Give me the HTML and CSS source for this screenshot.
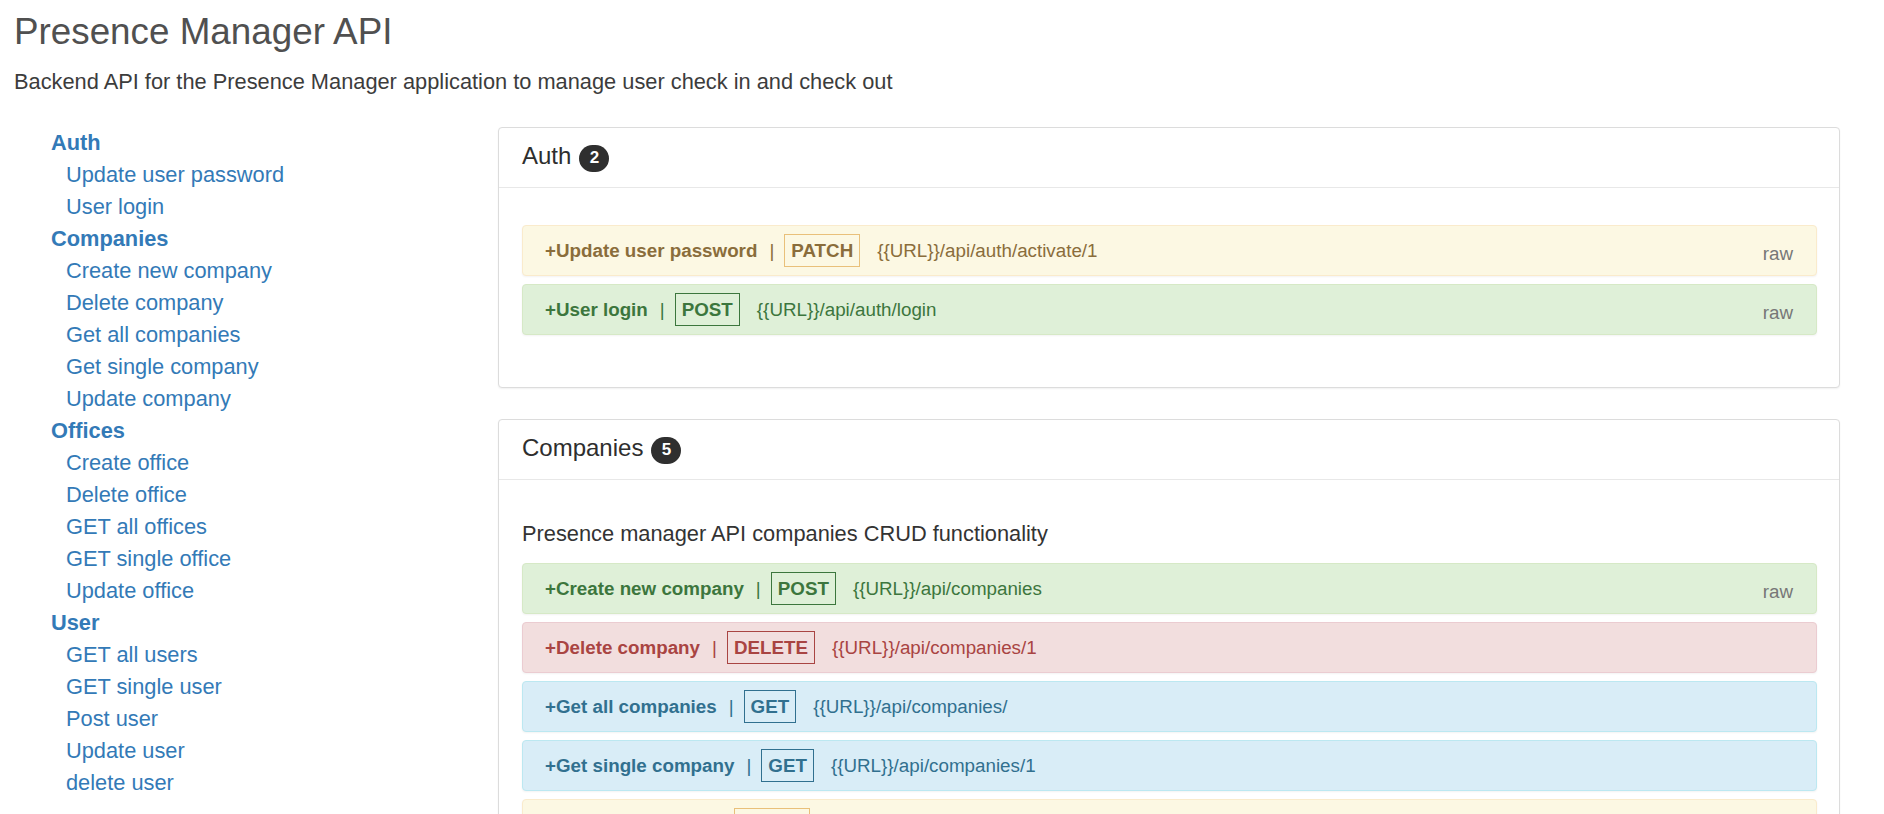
FILE: index.html
```html
<!DOCTYPE html>
<html lang="en">
<head>
<meta charset="utf-8">
<title>Presence Manager API</title>
<link rel="stylesheet" href="styles.css">
</head>
<body>
<div class="page">
  <header class="intro">
    <h1 class="title">Presence Manager API</h1>
    <p class="lead">Backend API for the Presence Manager application to manage user check in and check out</p>
  </header>
  <div class="layout">
    <nav class="toc">
      <ul class="toc-list">
        <li><a class="toc-head" href="#auth">Auth</a>
          <ul class="toc-sub">
            <li><a class="toc-link" href="#">Update user password</a></li>
            <li><a class="toc-link" href="#">User login</a></li>
          </ul>
        </li>
        <li><a class="toc-head" href="#companies">Companies</a>
          <ul class="toc-sub">
            <li><a class="toc-link" href="#">Create new company</a></li>
            <li><a class="toc-link" href="#">Delete company</a></li>
            <li><a class="toc-link" href="#">Get all companies</a></li>
            <li><a class="toc-link" href="#">Get single company</a></li>
            <li><a class="toc-link" href="#">Update company</a></li>
          </ul>
        </li>
        <li><a class="toc-head" href="#offices">Offices</a>
          <ul class="toc-sub">
            <li><a class="toc-link" href="#">Create office</a></li>
            <li><a class="toc-link" href="#">Delete office</a></li>
            <li><a class="toc-link" href="#">GET all offices</a></li>
            <li><a class="toc-link" href="#">GET single office</a></li>
            <li><a class="toc-link" href="#">Update office</a></li>
          </ul>
        </li>
        <li><a class="toc-head" href="#user">User</a>
          <ul class="toc-sub">
            <li><a class="toc-link" href="#">GET all users</a></li>
            <li><a class="toc-link" href="#">GET single user</a></li>
            <li><a class="toc-link" href="#">Post user</a></li>
            <li><a class="toc-link" href="#">Update user</a></li>
            <li><a class="toc-link" href="#">delete user</a></li>
          </ul>
        </li>
      </ul>
    </nav>
    <main class="content">
      <section class="panel" id="auth">
        <div class="panel-heading">
          <h2 class="panel-title">Auth</h2>
          <span class="count">2</span>
        </div>
        <div class="panel-body">
          <div class="endpoint endpoint--warning">
            <span class="ep-name">+Update user password</span>
            <span class="ep-sep">|</span>
            <span class="ep-method">PATCH</span>
            <span class="ep-url">{{URL}}/api/auth/activate/1</span>
            <span class="ep-raw">raw</span>
          </div>
          <div class="endpoint endpoint--success">
            <span class="ep-name">+User login</span>
            <span class="ep-sep">|</span>
            <span class="ep-method">POST</span>
            <span class="ep-url">{{URL}}/api/auth/login</span>
            <span class="ep-raw">raw</span>
          </div>
        </div>
      </section>
      <section class="panel" id="companies">
        <div class="panel-heading">
          <h2 class="panel-title">Companies</h2>
          <span class="count">5</span>
        </div>
        <div class="panel-body">
          <p class="desc">Presence manager API companies CRUD functionality</p>
          <div class="endpoint endpoint--success">
            <span class="ep-name">+Create new company</span>
            <span class="ep-sep">|</span>
            <span class="ep-method">POST</span>
            <span class="ep-url">{{URL}}/api/companies</span>
            <span class="ep-raw">raw</span>
          </div>
          <div class="endpoint endpoint--danger">
            <span class="ep-name">+Delete company</span>
            <span class="ep-sep">|</span>
            <span class="ep-method">DELETE</span>
            <span class="ep-url">{{URL}}/api/companies/1</span>
          </div>
          <div class="endpoint endpoint--info">
            <span class="ep-name">+Get all companies</span>
            <span class="ep-sep">|</span>
            <span class="ep-method">GET</span>
            <span class="ep-url">{{URL}}/api/companies/</span>
          </div>
          <div class="endpoint endpoint--info">
            <span class="ep-name">+Get single company</span>
            <span class="ep-sep">|</span>
            <span class="ep-method">GET</span>
            <span class="ep-url">{{URL}}/api/companies/1</span>
          </div>
          <div class="endpoint endpoint--warning">
            <span class="ep-name">+Update company</span>
            <span class="ep-sep">|</span>
            <span class="ep-method">PATCH</span>
            <span class="ep-url">{{URL}}/api/companies/1</span>
            <span class="ep-raw">raw</span>
          </div>
        </div>
      </section>
    </main>
  </div>
</div>
</body>
</html>
```

FILE: styles.css
```css
html, body {
  margin: 0;
  padding: 0;
  background: #fff;
}

body {
  font-family: "Liberation Sans", Arial, Helvetica, sans-serif;
  color: #333;
}

.intro {
  padding-left: 14px;
}

.title {
  margin: 12px 0 0;
  font-size: 36.8px;
  line-height: 40px;
  font-weight: 400;
  color: #505050;
}

.lead {
  margin: 15px 0 0;
  font-size: 21.8px;
  line-height: 30px;
  color: #3c3c3c;
}

.layout {
  display: grid;
  grid-template-columns: 498px 1342px;
  margin-top: 30px;
}

.toc {
  padding-left: 51px;
}

.toc-list,
.toc-sub {
  list-style: none;
  margin: 0;
  padding: 0;
}

.toc-sub {
  padding-left: 15px;
}

.toc-head,
.toc-link {
  display: block;
  font-size: 21.8px;
  line-height: 32px;
  color: #337ab7;
  text-decoration: none;
}

.toc-head {
  font-weight: 700;
}

.panel {
  background: #fff;
  border: 1px solid #dcdcdc;
  border-radius: 4px;
  box-shadow: 0 1px 2px rgba(0, 0, 0, 0.06);
  margin-bottom: 31px;
}

.panel-heading {
  box-sizing: border-box;
  height: 60px;
  display: flex;
  align-items: center;
  padding: 0 22px 3px 23px;
  border-bottom: 1px solid #e8e8e8;
}

.panel-title {
  margin: 0;
  font-size: 24px;
  line-height: 28px;
  font-weight: 400;
  color: #2e2e2e;
}

.count {
  display: flex;
  align-items: center;
  justify-content: center;
  width: 30px;
  height: 27px;
  margin: 4px 0 0 8px;
  border-radius: 14px;
  background: #2f2f2f;
  color: #fff;
  font-size: 17px;
  font-weight: 700;
}

.panel-body {
  display: flex;
  flex-direction: column;
  gap: 8px;
  padding: 37px 22px 52px 23px;
}

.desc {
  margin: 0 0 6px;
  padding-top: 2px;
  font-size: 21.8px;
  line-height: 30px;
  color: #333;
}

.endpoint {
  display: flex;
  align-items: center;
  padding: 8px 23px 8px 22px;
  border: 1px solid;
  border-radius: 4px;
  font-size: 18.8px;
  box-shadow: 0 1px 2px rgba(0, 0, 0, 0.05);
}

.ep-name {
  font-weight: 700;
}

.ep-sep {
  margin: 0 10px 0 12px;
}

.ep-method {
  border: 1px solid;
  padding: 0 6px;
  line-height: 31px;
  font-weight: 700;
}

.ep-url {
  margin-left: 17px;
}

.ep-raw {
  margin-left: auto;
  padding-top: 6px;
  color: #777;
}

.endpoint--warning {
  background: #fcf8e3;
  border-color: #faebcc;
  color: #8a6d3b;
}

.endpoint--warning .ep-method {
  border-color: #e9c07a;
}

.endpoint--success {
  background: #dff0d8;
  border-color: #d6e9c6;
  color: #3c763d;
}

.endpoint--success .ep-method {
  border-color: #3c763d;
}

.endpoint--danger {
  background: #f2dede;
  border-color: #ebccd1;
  color: #a94442;
}

.endpoint--danger .ep-method {
  border-color: #a94442;
}

.endpoint--info {
  background: #d9edf7;
  border-color: #bce8f1;
  color: #31708f;
}

.endpoint--info .ep-method {
  border-color: #31708f;
}
```
